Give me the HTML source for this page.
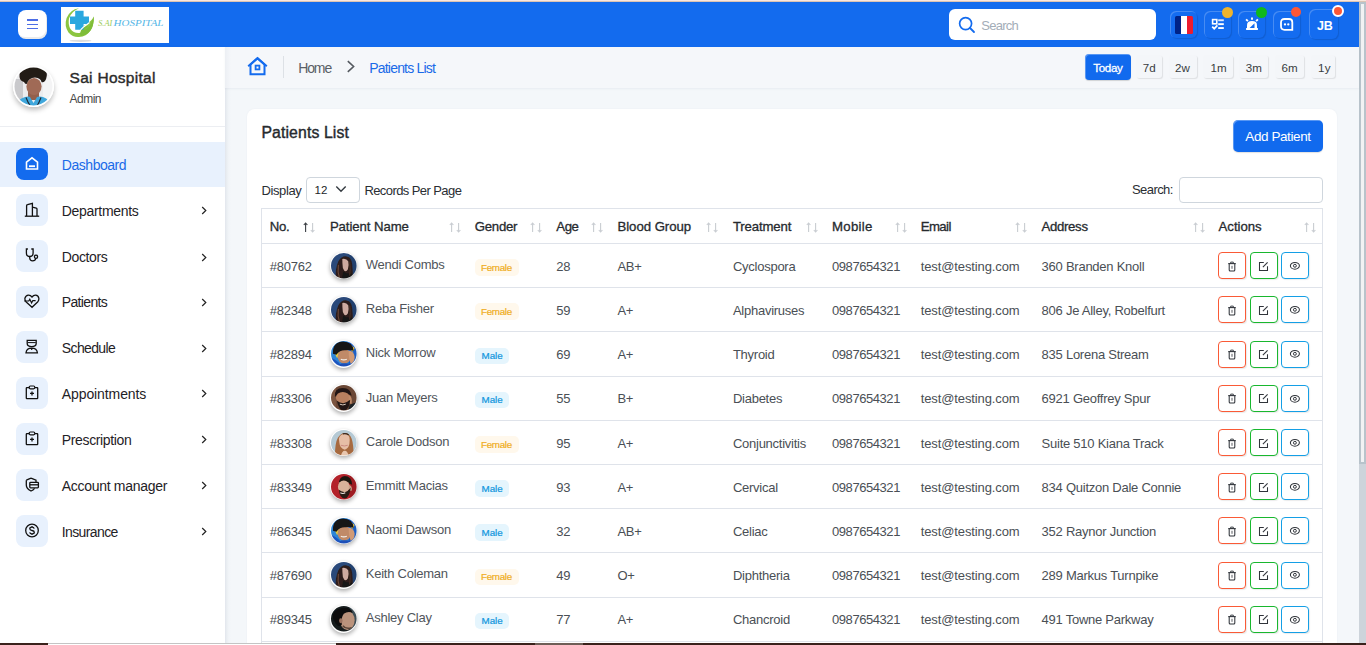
<!DOCTYPE html>
<html><head><meta charset="utf-8"><title>Patients List</title>
<style>
html,body{margin:0;padding:0}
body{width:1366px;height:645px;overflow:hidden;position:relative;background:#f4f7fa;font-family:"Liberation Sans",sans-serif}
</style></head><body>
<div style="position:absolute;left:0;top:0;width:1366px;height:1px;background:#fae7de"></div><div style="position:absolute;left:0;top:1px;width:1366px;height:1px;background:#dcc4b4"></div>
<div style="position:absolute;left:0;top:2px;width:1359px;height:45px;background:#136bee"></div>
<div style="position:absolute;left:1359px;top:2px;width:7px;height:643px;background:#cdd4db"></div>
<div style="position:absolute;left:1359px;top:2px;width:7px;height:462px;background:#b8c3cb"></div>
<div style="position:absolute;left:1361px;top:4px;width:3px;height:458px;background:#f1f2f4"></div>
<div style="position:absolute;left:18px;top:10px;width:29px;height:29px;background:#fff;border-radius:8px;box-shadow:inset -1px -2px 0 rgba(0,0,0,0.08)"></div>
<div style="position:absolute;left:27px;top:19.3px;width:11px;height:1.6px;background:#4d6ee6"></div>
<div style="position:absolute;left:27px;top:23.5px;width:11px;height:1.6px;background:#4d6ee6"></div>
<div style="position:absolute;left:27px;top:27.7px;width:11px;height:1.6px;background:#4d6ee6"></div>
<div style="position:absolute;left:61px;top:7px;width:108px;height:36px;background:#fff"></div>
<svg style="position:absolute;left:61px;top:7px" width="108" height="36" viewBox="0 0 108 36">
 <ellipse cx="19.5" cy="33.8" rx="11" ry="1.1" fill="#dcdcdc"/>
 <path d="M18 1.2 Q9 2.5 5.6 11 Q3 19 7.5 25.5 Q12 30.5 18 30 Q25.5 29.5 29.5 23.5 Q33 18.5 32.8 9.5 Q31.5 12.5 29.5 14 Q28 15 26.5 16.5 Q22 19 19.5 22.5 Q18.8 24.5 18.5 26 Q12.5 26.5 9.5 22 Q6.8 17.5 8 11.5 Q10 4.5 18 1.2Z" fill="#8cc540"/>
 <path d="M18.5 26 Q19.5 21.5 23.5 19.5 Q26.5 18 27 19.5 Q25 21 22 23.5 Q25.5 22 28 19.8 Q30 17 32.8 9.5 Q33 18.5 29.5 23.5 Q26 28 20 29Z" fill="#7fbd38"/>
 <path d="M14.2 3.8 H22.6 V9.5 H28 V17 H22.6 V22.7 H14.2 V17 H9 V9.5 H14.2Z" fill="#2aa7df"/>
 <path d="M18.5 26 Q19.3 22 22.5 20 Q25.5 18 28.5 15.5" fill="none" stroke="#fff" stroke-width="1.1"/>
 <text x="37.2" y="19.3" font-family="Liberation Serif" font-style="italic" font-size="9" fill="#9ccc5a" textLength="14" lengthAdjust="spacingAndGlyphs">S.AI</text>
 <text x="52.5" y="19.3" font-family="Liberation Serif" font-style="italic" font-size="9" fill="#52b5e6" textLength="50" lengthAdjust="spacingAndGlyphs">HOSPITAL</text>
</svg>
<div style="position:absolute;left:949px;top:9px;width:207px;height:31px;background:#fff;border-radius:6px"></div>
<svg style="position:absolute;left:958px;top:16px" width="18" height="18" viewBox="0 0 18 18"><circle cx="7.6" cy="7.6" r="6" fill="none" stroke="#136bee" stroke-width="1.7"/><path d="M12 12 L16 16" stroke="#136bee" stroke-width="1.8" stroke-linecap="round"/></svg>
<div style="position:absolute;left:1170px;top:11px;width:27px;height:27px;border-radius:6px;box-shadow:inset 1px 1px 0 rgba(255,255,255,0.22), 1px 1px 1px rgba(0,0,0,0.12);background:#146cf0"></div>
<div style="position:absolute;left:1204px;top:11px;width:27px;height:27px;border-radius:6px;box-shadow:inset 1px 1px 0 rgba(255,255,255,0.22), 1px 1px 1px rgba(0,0,0,0.12);background:#146cf0"></div>
<div style="position:absolute;left:1238px;top:11px;width:27px;height:27px;border-radius:6px;box-shadow:inset 1px 1px 0 rgba(255,255,255,0.22), 1px 1px 1px rgba(0,0,0,0.12);background:#146cf0"></div>
<div style="position:absolute;left:1273px;top:11px;width:27px;height:27px;border-radius:6px;box-shadow:inset 1px 1px 0 rgba(255,255,255,0.22), 1px 1px 1px rgba(0,0,0,0.12);background:#146cf0"></div>
<div style="position:absolute;left:1309px;top:9px;width:29px;height:30px;border-radius:6px;box-shadow:inset 1px 1px 0 rgba(255,255,255,0.22), 1px 1px 1px rgba(0,0,0,0.12);background:#146cf0"></div>
<div style="position:absolute;left:1175px;top:16px;width:18px;height:18px;border-radius:1.5px;overflow:hidden;display:flex"><div style="flex:1;background:#002387"></div><div style="flex:1;background:#fff"></div><div style="flex:1;background:#ed1c2e"></div></div>
<svg style="position:absolute;left:1211px;top:18px" width="14" height="13" viewBox="0 0 14 13">
<rect x="1.6" y="1.6" width="4.2" height="4.2" fill="none" stroke="#fff" stroke-width="1.6"/>
<rect x="7.2" y="1.3" width="5.6" height="1.9" fill="#fff" opacity="0.85"/>
<rect x="7.2" y="5.2" width="5.6" height="1.9" fill="#fff"/>
<rect x="7.2" y="9.1" width="5.6" height="1.9" fill="#fff"/>
<path d="M1.2 8.7 L3.2 10.7 L6.4 7.3" fill="none" stroke="#fff" stroke-width="1.7"/>
</svg>
<svg style="position:absolute;left:1245px;top:17px" width="14" height="14" viewBox="0 0 14 14">
<path d="M2 12.9 V8.2 Q2 4 7 4 Q12 4 12 8.2 V12.9Z" fill="#fff"/>
<rect x="1.1" y="11" width="11.8" height="2" fill="#fff"/>
<path d="M4.6 11 L9.5 6.3 V11Z" fill="#146cf0"/>
<path d="M7 0.4 V2.8 M1.1 2.4 L2.9 4.1 M12.9 2.4 L11.1 4.1" stroke="#fff" stroke-width="1.9"/>
</svg>
<svg style="position:absolute;left:1280px;top:18px" width="14" height="13" viewBox="0 0 14 13">
<path d="M4.5 1 H9 Q12.3 1 12.3 4.3 V11.8 H4.5 Q1 11.8 1 8.3 V4.5 Q1 1 4.5 1Z" fill="none" stroke="#fff" stroke-width="1.8"/>
<circle cx="5" cy="6.4" r="1.15" fill="#fff"/><circle cx="8.3" cy="6.4" r="1.15" fill="#fff"/>
</svg>
<div style="position:absolute;left:1222px;top:7px;width:11px;height:11px;border-radius:50%;background:#efb42c"></div>
<div style="position:absolute;left:1256px;top:7px;width:11px;height:11px;border-radius:50%;background:#10b81c"></div>
<div style="position:absolute;left:1291px;top:7.4px;width:10px;height:10px;border-radius:50%;background:#fd5735"></div>
<div style="position:absolute;left:1332px;top:5px;width:8px;height:8px;border-radius:50%;background:#fd5735;border:2px solid #fff"></div>
<div style="position:absolute;left:0;top:47px;width:225px;height:598px;background:#fff;box-shadow:1px 0 3px rgba(30,50,90,0.06)"></div>
<div style="position:absolute;left:13px;top:66px;width:41px;height:41px;border-radius:50%;box-shadow:0 3px 5px rgba(0,0,0,0.25)"></div>
<svg style="position:absolute;left:13px;top:66px" width="41" height="41" viewBox="0 0 41 41">
<defs><clipPath id="av0"><circle cx="20.5" cy="20.5" r="19"/></clipPath><filter id="avb"><feGaussianBlur stdDeviation="0.5"/></filter></defs>
<circle cx="20.5" cy="20.5" r="20.5" fill="#fff"/>
<g clip-path="url(#av0)"><g filter="url(#avb)">
<rect width="41" height="41" fill="#ececee"/>
<rect x="0" y="13" width="10" height="28" fill="#c9c9cc"/>
<rect x="30" y="10" width="11" height="31" fill="#f4f4f5"/>
<rect x="15" y="24" width="11" height="10" fill="#94604c"/>
<path d="M3 41 Q4 33 12 31 Q16 30 17 31 L20.5 37 L24 31 Q26 30 30 31 Q37 33 38 41Z" fill="#3fa7dc"/>
<ellipse cx="21" cy="20.5" rx="7.6" ry="8.6" fill="#a06b56"/>
<path d="M6.5 11 Q5 3 13 2 Q16 -1 23 0 Q31 0 33 5 Q35 10 32 15 Q30 17 28.5 16 Q28 12 22 11.5 Q15.5 12 14 17.5 Q12.5 19 11 16 Q7 15 6.5 11Z" fill="#231a17"/>
<path d="M13 31.5 Q15 37 18 41 M28 31.5 Q26 37 23.5 41" stroke="#1d2733" stroke-width="1.1" fill="none"/>
</g></g>
</svg>
<div style="position:absolute;left:0;top:126px;width:225px;height:1px;background:#eceef2"></div>
<div style="position:absolute;left:0;top:142px;width:225px;height:45px;background:#e8f1fd"></div>
<div style="position:absolute;left:16px;top:148px;width:32px;height:32px;border-radius:8px;background:#136bee"></div>
<svg style="position:absolute;left:24px;top:156px" width="16" height="16" viewBox="0 0 16 16"><path d="M2.5 13 V6.2 L8 1.8 L13.5 6.2 V13 Z" fill="none" stroke="#fff" stroke-width="1.6"/><path d="M5 10.2 H11" stroke="#fff" stroke-width="1.8"/></svg>
<div style="position:absolute;left:16px;top:194px;width:32px;height:32px;border-radius:8px;background:#e8f1fd"></div>
<svg style="position:absolute;left:24px;top:202px" width="16" height="16" viewBox="0 0 16 16"><path d="M0.8 14.2 H15.2" stroke="#111" stroke-width="1.3"/><path d="M2.6 14 V3.7 Q2.6 2.9 3.5 2.7 L8.4 1.4 V14 M8.4 5.2 L12.3 6.2 Q13 6.4 13 7.2 V14" fill="none" stroke="#111" stroke-width="1.3"/></svg>
<svg style="position:absolute;left:200px;top:206.2px" width="9" height="9" viewBox="0 0 9 9"><path d="M2.2 1 L5.8 4.5 L2.2 8" fill="none" stroke="#222" stroke-width="1.2"/></svg>
<div style="position:absolute;left:16px;top:240px;width:32px;height:32px;border-radius:8px;background:#e8f1fd"></div>
<svg style="position:absolute;left:24px;top:248px" width="16" height="16" viewBox="0 0 16 16"><path d="M3.9 1 H2.4 V5 Q2.4 8.5 5.7 8.5 Q9.1 8.5 9.1 5 V1 H7.3" fill="none" stroke="#111" stroke-width="1.3"/><path d="M5.7 8.5 V10 Q5.9 12.8 8.6 12.8 Q11.4 12.8 11.8 10.3" fill="none" stroke="#111" stroke-width="1.3"/><circle cx="12" cy="8.8" r="1.6" fill="none" stroke="#111" stroke-width="1.3"/></svg>
<svg style="position:absolute;left:200px;top:252.60000000000002px" width="9" height="9" viewBox="0 0 9 9"><path d="M2.2 1 L5.8 4.5 L2.2 8" fill="none" stroke="#222" stroke-width="1.2"/></svg>
<div style="position:absolute;left:16px;top:286px;width:32px;height:32px;border-radius:8px;background:#e8f1fd"></div>
<svg style="position:absolute;left:24px;top:294px" width="16" height="16" viewBox="0 0 16 16"><path d="M8 13.3 L2.2 8 Q0.5 6.3 1 4 Q1.8 1.3 4.4 1.2 Q6.5 1.1 8 3 Q9.5 1.1 11.6 1.2 Q14.3 1.4 14.8 4.2 Q15.2 6.4 13.6 8 Z" fill="none" stroke="#111" stroke-width="1.3"/><path d="M0.2 7 H4.8 L5.8 5.2 L7.6 9 L8.8 6.6 H11.6" fill="none" stroke="#111" stroke-width="1.2"/></svg>
<svg style="position:absolute;left:200px;top:297.5px" width="9" height="9" viewBox="0 0 9 9"><path d="M2.2 1 L5.8 4.5 L2.2 8" fill="none" stroke="#222" stroke-width="1.2"/></svg>
<div style="position:absolute;left:16px;top:331px;width:32px;height:32px;border-radius:8px;background:#e8f1fd"></div>
<svg style="position:absolute;left:24px;top:339px" width="16" height="16" viewBox="0 0 16 16"><path d="M3.2 1.3 H12.2 V4.5 Q12.2 7.6 7.7 7.6 Q3.2 7.6 3.2 4.5 Z" fill="none" stroke="#111" stroke-width="1.3"/><path d="M3.6 3.6 H11.8" stroke="#111" stroke-width="1"/><path d="M2 13.8 Q2.5 9.3 7.7 9.2 Q12.9 9.3 13.4 13.8 Z" fill="none" stroke="#111" stroke-width="1.3"/><path d="M7.7 9.5 V11" stroke="#111" stroke-width="1.2"/></svg>
<svg style="position:absolute;left:200px;top:343.5px" width="9" height="9" viewBox="0 0 9 9"><path d="M2.2 1 L5.8 4.5 L2.2 8" fill="none" stroke="#222" stroke-width="1.2"/></svg>
<div style="position:absolute;left:16px;top:377px;width:32px;height:32px;border-radius:8px;background:#e8f1fd"></div>
<svg style="position:absolute;left:24px;top:385px" width="16" height="16" viewBox="0 0 16 16"><rect x="2.3" y="2.6" width="11.4" height="11" rx="0.6" fill="none" stroke="#111" stroke-width="1.3"/><rect x="5.2" y="1" width="5.6" height="2.8" rx="1.2" fill="#e8f1fd" stroke="#111" stroke-width="1.2"/><path d="M6 8.4 H10 M8 6.4 V10.4" stroke="#111" stroke-width="1.3"/></svg>
<svg style="position:absolute;left:200px;top:389.0px" width="9" height="9" viewBox="0 0 9 9"><path d="M2.2 1 L5.8 4.5 L2.2 8" fill="none" stroke="#222" stroke-width="1.2"/></svg>
<div style="position:absolute;left:16px;top:423px;width:32px;height:32px;border-radius:8px;background:#e8f1fd"></div>
<svg style="position:absolute;left:24px;top:431px" width="16" height="16" viewBox="0 0 16 16"><rect x="2.3" y="2.6" width="11.4" height="11" rx="0.6" fill="none" stroke="#111" stroke-width="1.3"/><rect x="5.2" y="1" width="5.6" height="2.8" rx="1.2" fill="#e8f1fd" stroke="#111" stroke-width="1.2"/><path d="M6 8.4 H10 M8 6.4 V10.4" stroke="#111" stroke-width="1.3"/></svg>
<svg style="position:absolute;left:200px;top:435.3px" width="9" height="9" viewBox="0 0 9 9"><path d="M2.2 1 L5.8 4.5 L2.2 8" fill="none" stroke="#222" stroke-width="1.2"/></svg>
<div style="position:absolute;left:16px;top:469px;width:32px;height:32px;border-radius:8px;background:#e8f1fd"></div>
<svg style="position:absolute;left:24px;top:477px" width="16" height="16" viewBox="0 0 16 16"><path d="M7 1.2 L12 3.2 V6 M2.3 3.2 L7 1.2 M2.3 3.2 V8 Q2.3 11.8 7 14 Q9.2 13 10.6 11.3" fill="none" stroke="#111" stroke-width="1.3"/><rect x="5.8" y="5.3" width="8.6" height="5.6" rx="0.8" fill="#e8f1fd" stroke="#111" stroke-width="1.3"/><path d="M6 7.8 H14.2" stroke="#111" stroke-width="1.3"/></svg>
<svg style="position:absolute;left:200px;top:481.2px" width="9" height="9" viewBox="0 0 9 9"><path d="M2.2 1 L5.8 4.5 L2.2 8" fill="none" stroke="#222" stroke-width="1.2"/></svg>
<div style="position:absolute;left:16px;top:515px;width:32px;height:32px;border-radius:8px;background:#e8f1fd"></div>
<svg style="position:absolute;left:24px;top:523px" width="16" height="16" viewBox="0 0 16 16"><circle cx="8" cy="7.5" r="6.3" fill="none" stroke="#111" stroke-width="1.3"/><path d="M10.2 5.6 Q9.8 4.2 8 4.2 Q5.8 4.2 5.8 5.8 Q5.8 7.2 8 7.5 Q10.3 7.8 10.3 9.3 Q10.3 10.9 8 10.9 Q6 10.9 5.7 9.4 M8 3 V4.2 M8 10.9 V12" fill="none" stroke="#111" stroke-width="1.3"/></svg>
<svg style="position:absolute;left:200px;top:527.1px" width="9" height="9" viewBox="0 0 9 9"><path d="M2.2 1 L5.8 4.5 L2.2 8" fill="none" stroke="#222" stroke-width="1.2"/></svg>
<div style="position:absolute;left:225px;top:47px;width:1134px;height:41px;background:#f5f7fa;box-shadow:0 1px 2px rgba(40,60,100,0.06)"></div>
<div style="position:absolute;left:225px;top:47px;width:6px;height:598px;background:linear-gradient(90deg,rgba(40,60,100,0.045),rgba(40,60,100,0))"></div>
<svg style="position:absolute;left:247px;top:56px" width="21" height="20" viewBox="0 0 21 20"><path d="M3.5 18.2 V8.6 L10.5 2.4 L17.5 8.6 V18.2 Z" fill="none" stroke="#136bee" stroke-width="2"/><path d="M1.2 10.2 L10.5 2 L19.8 10.2" fill="none" stroke="#136bee" stroke-width="2"/><rect x="8.6" y="9.6" width="3.8" height="3.8" fill="none" stroke="#136bee" stroke-width="1.8"/></svg>
<div style="position:absolute;left:283px;top:56px;width:1px;height:22px;background:#dde1e6"></div>
<svg style="position:absolute;left:345px;top:60px" width="12" height="13" viewBox="0 0 12 13"><path d="M2.8 1.2 L8.6 6.5 L2.8 11.8" fill="none" stroke="#555a60" stroke-width="1.6"/></svg>
<div style="position:absolute;left:1085px;top:54px;width:46px;height:26px;border-radius:4px;background:#116aee;box-shadow:inset 1px 1px 0 rgba(255,255,255,0.3), 0 1px 1px rgba(0,0,0,0.15)"></div>
<div style="position:absolute;left:1136px;top:55px;width:26px;height:23px;border-radius:3px;background:#f4f6f9;box-shadow:1px 1px 1px rgba(0,0,0,0.09)"></div>
<div style="position:absolute;left:1169px;top:55px;width:28px;height:23px;border-radius:3px;background:#f4f6f9;box-shadow:1px 1px 1px rgba(0,0,0,0.09)"></div>
<div style="position:absolute;left:1203px;top:55px;width:29.5px;height:23px;border-radius:3px;background:#f4f6f9;box-shadow:1px 1px 1px rgba(0,0,0,0.09)"></div>
<div style="position:absolute;left:1239px;top:55px;width:29.299999999999955px;height:23px;border-radius:3px;background:#f4f6f9;box-shadow:1px 1px 1px rgba(0,0,0,0.09)"></div>
<div style="position:absolute;left:1275.2px;top:55px;width:29.09999999999991px;height:23px;border-radius:3px;background:#f4f6f9;box-shadow:1px 1px 1px rgba(0,0,0,0.09)"></div>
<div style="position:absolute;left:1310.6px;top:55px;width:24.700000000000045px;height:23px;border-radius:3px;background:#f4f6f9;box-shadow:1px 1px 1px rgba(0,0,0,0.09)"></div>
<div style="position:absolute;left:247px;top:108.5px;width:1090px;height:600px;border-radius:8px;background:#fff;box-shadow:0 0 2px rgba(40,60,100,0.05)"></div>
<div style="position:absolute;left:1233px;top:120px;width:90px;height:32px;border-radius:5px;background:#116aee;box-shadow:inset 1px 1px 0 rgba(255,255,255,0.3), 0 1px 1px rgba(0,0,0,0.12)"></div>
<div style="position:absolute;left:306px;top:177px;width:52px;height:24px;border:1px solid #cfd6dd;border-radius:4px;background:#fff"></div>
<svg style="position:absolute;left:335px;top:185px" width="12" height="8" viewBox="0 0 12 8"><path d="M1.3 1.6 L6 6.3 L10.7 1.6" fill="none" stroke="#343a40" stroke-width="1.4"/></svg>
<div style="position:absolute;left:1179px;top:177px;width:142px;height:24px;border:1px solid #cfd6dd;border-radius:4px;background:#fff"></div>
<div style="position:absolute;left:261px;top:208px;width:1px;height:437px;background:#dfe3ea"></div>
<div style="position:absolute;left:1322px;top:208px;width:1px;height:437px;background:#dfe3ea"></div>
<div style="position:absolute;left:261px;top:208px;width:1062px;height:1px;background:#dfe3ea"></div>
<div style="position:absolute;left:261px;top:243.0px;width:1062px;height:1px;background:#dfe3ea"></div>
<div style="position:absolute;left:261px;top:287.2px;width:1062px;height:1px;background:#dfe3ea"></div>
<div style="position:absolute;left:261px;top:331.4px;width:1062px;height:1px;background:#dfe3ea"></div>
<div style="position:absolute;left:261px;top:375.6px;width:1062px;height:1px;background:#dfe3ea"></div>
<div style="position:absolute;left:261px;top:419.8px;width:1062px;height:1px;background:#dfe3ea"></div>
<div style="position:absolute;left:261px;top:464.0px;width:1062px;height:1px;background:#dfe3ea"></div>
<div style="position:absolute;left:261px;top:508.2px;width:1062px;height:1px;background:#dfe3ea"></div>
<div style="position:absolute;left:261px;top:552.4px;width:1062px;height:1px;background:#dfe3ea"></div>
<div style="position:absolute;left:261px;top:596.6px;width:1062px;height:1px;background:#dfe3ea"></div>
<div style="position:absolute;left:261px;top:640.8px;width:1062px;height:1px;background:#dfe3ea"></div>
<svg style="position:absolute;left:303.4px;top:222px" width="12" height="11" viewBox="0 0 12 11"><path d="M2.6 10 V1.2 M0.8 3 L2.6 1 L4.4 3" fill="none" stroke="#3b3f44" stroke-width="1.1"/><path d="M9.6 1 V9.8 M7.8 8 L9.6 10 L11.4 8" fill="none" stroke="#c9cdd2" stroke-width="1.1"/></svg>
<svg style="position:absolute;left:448.5px;top:222px" width="12" height="11" viewBox="0 0 12 11"><path d="M2.6 10 V1.2 M0.8 3 L2.6 1 L4.4 3" fill="none" stroke="#c9cdd2" stroke-width="1.1"/><path d="M9.6 1 V9.8 M7.8 8 L9.6 10 L11.4 8" fill="none" stroke="#c9cdd2" stroke-width="1.1"/></svg>
<svg style="position:absolute;left:530.2px;top:222px" width="12" height="11" viewBox="0 0 12 11"><path d="M2.6 10 V1.2 M0.8 3 L2.6 1 L4.4 3" fill="none" stroke="#c9cdd2" stroke-width="1.1"/><path d="M9.6 1 V9.8 M7.8 8 L9.6 10 L11.4 8" fill="none" stroke="#c9cdd2" stroke-width="1.1"/></svg>
<svg style="position:absolute;left:591.1px;top:222px" width="12" height="11" viewBox="0 0 12 11"><path d="M2.6 10 V1.2 M0.8 3 L2.6 1 L4.4 3" fill="none" stroke="#c9cdd2" stroke-width="1.1"/><path d="M9.6 1 V9.8 M7.8 8 L9.6 10 L11.4 8" fill="none" stroke="#c9cdd2" stroke-width="1.1"/></svg>
<svg style="position:absolute;left:705.5px;top:222px" width="12" height="11" viewBox="0 0 12 11"><path d="M2.6 10 V1.2 M0.8 3 L2.6 1 L4.4 3" fill="none" stroke="#c9cdd2" stroke-width="1.1"/><path d="M9.6 1 V9.8 M7.8 8 L9.6 10 L11.4 8" fill="none" stroke="#c9cdd2" stroke-width="1.1"/></svg>
<svg style="position:absolute;left:805.7px;top:222px" width="12" height="11" viewBox="0 0 12 11"><path d="M2.6 10 V1.2 M0.8 3 L2.6 1 L4.4 3" fill="none" stroke="#c9cdd2" stroke-width="1.1"/><path d="M9.6 1 V9.8 M7.8 8 L9.6 10 L11.4 8" fill="none" stroke="#c9cdd2" stroke-width="1.1"/></svg>
<svg style="position:absolute;left:894.7px;top:222px" width="12" height="11" viewBox="0 0 12 11"><path d="M2.6 10 V1.2 M0.8 3 L2.6 1 L4.4 3" fill="none" stroke="#c9cdd2" stroke-width="1.1"/><path d="M9.6 1 V9.8 M7.8 8 L9.6 10 L11.4 8" fill="none" stroke="#c9cdd2" stroke-width="1.1"/></svg>
<svg style="position:absolute;left:1015.4px;top:222px" width="12" height="11" viewBox="0 0 12 11"><path d="M2.6 10 V1.2 M0.8 3 L2.6 1 L4.4 3" fill="none" stroke="#c9cdd2" stroke-width="1.1"/><path d="M9.6 1 V9.8 M7.8 8 L9.6 10 L11.4 8" fill="none" stroke="#c9cdd2" stroke-width="1.1"/></svg>
<svg style="position:absolute;left:1193.1px;top:222px" width="12" height="11" viewBox="0 0 12 11"><path d="M2.6 10 V1.2 M0.8 3 L2.6 1 L4.4 3" fill="none" stroke="#c9cdd2" stroke-width="1.1"/><path d="M9.6 1 V9.8 M7.8 8 L9.6 10 L11.4 8" fill="none" stroke="#c9cdd2" stroke-width="1.1"/></svg>
<svg style="position:absolute;left:1303.7px;top:222px" width="12" height="11" viewBox="0 0 12 11"><path d="M2.6 10 V1.2 M0.8 3 L2.6 1 L4.4 3" fill="none" stroke="#c9cdd2" stroke-width="1.1"/><path d="M9.6 1 V9.8 M7.8 8 L9.6 10 L11.4 8" fill="none" stroke="#c9cdd2" stroke-width="1.1"/></svg>
<div style="position:absolute;left:329.7px;top:251.7px;width:27.6px;height:27.6px;border-radius:50%;background:#fff;box-shadow:0 2px 4px rgba(0,0,0,0.33)"></div>
<svg style="position:absolute;left:329.7px;top:251.7px" width="27.6" height="27.6" viewBox="0 0 28 28"><defs><clipPath id="c0"><circle cx="14" cy="14" r="13"/></clipPath><filter id="f0" x="-10%" y="-10%" width="120%" height="120%"><feGaussianBlur stdDeviation="0.45"/></filter></defs><g clip-path="url(#c0)"><g filter="url(#f0)"><rect width="28" height="28" fill="#2b4a7a"/><rect x="19" width="9" height="28" fill="#22406e"/><path d="M6 28 Q5 17 8.5 9.5 Q12 3.5 17 4.5 Q22 5.5 22.5 12.5 Q23.5 20 23 28Z" fill="#2d1f1a"/><path d="M12.5 7 Q16.5 6 18.5 9.5 Q19.5 14 18.2 17.5 Q16.5 20.5 14.5 19 Q12.5 16.5 12.6 11.5Z" fill="#cfaaa0"/><path d="M13.5 20 Q17 22.5 22 22 L24 28 H12Z" fill="#161314"/><path d="M8.5 13 Q7.5 20 9.5 26" stroke="#6e4838" stroke-width="1.1" fill="none"/><path d="M20 10 Q21 17 20 24" stroke="#4a3026" stroke-width="1" fill="none"/></g></g></svg>
<div style="position:absolute;left:475px;top:259.2px;width:44px;height:16.5px;border-radius:5px;background:#fff8ec"></div>
<div style="position:absolute;left:1218px;top:252.2px;width:26px;height:25px;border:1px solid #fa5a36;border-radius:4px;background:#fff;box-shadow:1px 1px 1px rgba(0,0,0,0.08)"></div>
<svg style="position:absolute;left:1227px;top:260.8px" width="10" height="11" viewBox="0 0 10 11"><path d="M1.2 2.6 H8.8" stroke="#30343a" stroke-width="1.1"/><path d="M3.7 2.3 V1.1 H6.3 V2.3" fill="none" stroke="#30343a" stroke-width="0.9"/><path d="M2.2 2.9 V8.9 Q2.2 9.9 3.2 9.9 H6.8 Q7.8 9.9 7.8 8.9 V2.9" fill="none" stroke="#30343a" stroke-width="1.05"/><path d="M5 4.8 V7.8" stroke="#30343a" stroke-width="0.8"/></svg>
<div style="position:absolute;left:1250px;top:252.2px;width:26px;height:25px;border:1px solid #18b72e;border-radius:4px;background:#fff;box-shadow:1px 1px 1px rgba(0,0,0,0.08)"></div>
<svg style="position:absolute;left:1258px;top:260.8px" width="11" height="11" viewBox="0 0 11 11"><path d="M5.8 1.5 H1.5 V9.5 H9.5 V5.2" fill="none" stroke="#30343a" stroke-width="1.05"/><path d="M4.9 6.1 L9.6 1.4" stroke="#30343a" stroke-width="1.1"/></svg>
<div style="position:absolute;left:1281px;top:252.2px;width:26px;height:25px;border:1px solid #149fe6;border-radius:4px;background:#fff;box-shadow:1px 1px 1px rgba(0,0,0,0.08)"></div>
<svg style="position:absolute;left:1289px;top:260.9px" width="12" height="10" viewBox="0 0 12 10"><ellipse cx="5.9" cy="4.8" rx="4.5" ry="3.4" fill="none" stroke="#30343a" stroke-width="1.05"/><circle cx="5.9" cy="4.8" r="1.45" fill="none" stroke="#30343a" stroke-width="1"/></svg>
<div style="position:absolute;left:329.7px;top:295.9px;width:27.6px;height:27.6px;border-radius:50%;background:#fff;box-shadow:0 2px 4px rgba(0,0,0,0.33)"></div>
<svg style="position:absolute;left:329.7px;top:295.9px" width="27.6" height="27.6" viewBox="0 0 28 28"><defs><clipPath id="c1"><circle cx="14" cy="14" r="13"/></clipPath><filter id="f1" x="-10%" y="-10%" width="120%" height="120%"><feGaussianBlur stdDeviation="0.45"/></filter></defs><g clip-path="url(#c1)"><g filter="url(#f1)"><rect width="28" height="28" fill="#2b4a7a"/><rect x="19" width="9" height="28" fill="#22406e"/><path d="M6 28 Q5 17 8.5 9.5 Q12 3.5 17 4.5 Q22 5.5 22.5 12.5 Q23.5 20 23 28Z" fill="#2d1f1a"/><path d="M12.5 7 Q16.5 6 18.5 9.5 Q19.5 14 18.2 17.5 Q16.5 20.5 14.5 19 Q12.5 16.5 12.6 11.5Z" fill="#cfaaa0"/><path d="M13.5 20 Q17 22.5 22 22 L24 28 H12Z" fill="#161314"/><path d="M8.5 13 Q7.5 20 9.5 26" stroke="#6e4838" stroke-width="1.1" fill="none"/><path d="M20 10 Q21 17 20 24" stroke="#4a3026" stroke-width="1" fill="none"/></g></g></svg>
<div style="position:absolute;left:475px;top:303.4px;width:44px;height:16.5px;border-radius:5px;background:#fff8ec"></div>
<div style="position:absolute;left:1218px;top:296.4px;width:26px;height:25px;border:1px solid #fa5a36;border-radius:4px;background:#fff;box-shadow:1px 1px 1px rgba(0,0,0,0.08)"></div>
<svg style="position:absolute;left:1227px;top:305.0px" width="10" height="11" viewBox="0 0 10 11"><path d="M1.2 2.6 H8.8" stroke="#30343a" stroke-width="1.1"/><path d="M3.7 2.3 V1.1 H6.3 V2.3" fill="none" stroke="#30343a" stroke-width="0.9"/><path d="M2.2 2.9 V8.9 Q2.2 9.9 3.2 9.9 H6.8 Q7.8 9.9 7.8 8.9 V2.9" fill="none" stroke="#30343a" stroke-width="1.05"/><path d="M5 4.8 V7.8" stroke="#30343a" stroke-width="0.8"/></svg>
<div style="position:absolute;left:1250px;top:296.4px;width:26px;height:25px;border:1px solid #18b72e;border-radius:4px;background:#fff;box-shadow:1px 1px 1px rgba(0,0,0,0.08)"></div>
<svg style="position:absolute;left:1258px;top:305.0px" width="11" height="11" viewBox="0 0 11 11"><path d="M5.8 1.5 H1.5 V9.5 H9.5 V5.2" fill="none" stroke="#30343a" stroke-width="1.05"/><path d="M4.9 6.1 L9.6 1.4" stroke="#30343a" stroke-width="1.1"/></svg>
<div style="position:absolute;left:1281px;top:296.4px;width:26px;height:25px;border:1px solid #149fe6;border-radius:4px;background:#fff;box-shadow:1px 1px 1px rgba(0,0,0,0.08)"></div>
<svg style="position:absolute;left:1289px;top:305.1px" width="12" height="10" viewBox="0 0 12 10"><ellipse cx="5.9" cy="4.8" rx="4.5" ry="3.4" fill="none" stroke="#30343a" stroke-width="1.05"/><circle cx="5.9" cy="4.8" r="1.45" fill="none" stroke="#30343a" stroke-width="1"/></svg>
<div style="position:absolute;left:329.7px;top:340.1px;width:27.6px;height:27.6px;border-radius:50%;background:#fff;box-shadow:0 2px 4px rgba(0,0,0,0.33)"></div>
<svg style="position:absolute;left:329.7px;top:340.1px" width="27.6" height="27.6" viewBox="0 0 28 28"><defs><clipPath id="c2"><circle cx="14" cy="14" r="13"/></clipPath><filter id="f2" x="-10%" y="-10%" width="120%" height="120%"><feGaussianBlur stdDeviation="0.45"/></filter></defs><g clip-path="url(#c2)"><g filter="url(#f2)"><rect width="28" height="28" fill="#2f86d6"/><rect x="19" width="9" height="28" fill="#1f5fc4"/><path d="M0 18 Q8 20 12 27 L0 28Z" fill="#1d55c0"/><path d="M21 5 L25 8 L23 12 L20 9Z" fill="#e9c53c"/><path d="M5 14 L9 12 L10 17 L7 18Z" fill="#e9d040"/><ellipse cx="14.5" cy="16.5" rx="6.8" ry="7.5" fill="#c08a68"/><path d="M3 14 Q2.5 2 13 1.5 Q23.5 2 24 11 Q20 9.5 16 10.5 Q10 10 6.5 15Z" fill="#161212"/><path d="M19 11 Q24 11 25 17 Q25 23 21 24 Q19 20 19 11Z" fill="#d19a75"/><path d="M9 25 Q14 22 22 25 L22 28 H8Z" fill="#1b4fb8"/><path d="M11 19.5 Q14 21 17 19.5" stroke="#f4f0ea" stroke-width="1.2" fill="none"/></g></g></svg>
<div style="position:absolute;left:475px;top:347.6px;width:34px;height:16.5px;border-radius:5px;background:#e5f5fd"></div>
<div style="position:absolute;left:1218px;top:340.6px;width:26px;height:25px;border:1px solid #fa5a36;border-radius:4px;background:#fff;box-shadow:1px 1px 1px rgba(0,0,0,0.08)"></div>
<svg style="position:absolute;left:1227px;top:349.2px" width="10" height="11" viewBox="0 0 10 11"><path d="M1.2 2.6 H8.8" stroke="#30343a" stroke-width="1.1"/><path d="M3.7 2.3 V1.1 H6.3 V2.3" fill="none" stroke="#30343a" stroke-width="0.9"/><path d="M2.2 2.9 V8.9 Q2.2 9.9 3.2 9.9 H6.8 Q7.8 9.9 7.8 8.9 V2.9" fill="none" stroke="#30343a" stroke-width="1.05"/><path d="M5 4.8 V7.8" stroke="#30343a" stroke-width="0.8"/></svg>
<div style="position:absolute;left:1250px;top:340.6px;width:26px;height:25px;border:1px solid #18b72e;border-radius:4px;background:#fff;box-shadow:1px 1px 1px rgba(0,0,0,0.08)"></div>
<svg style="position:absolute;left:1258px;top:349.2px" width="11" height="11" viewBox="0 0 11 11"><path d="M5.8 1.5 H1.5 V9.5 H9.5 V5.2" fill="none" stroke="#30343a" stroke-width="1.05"/><path d="M4.9 6.1 L9.6 1.4" stroke="#30343a" stroke-width="1.1"/></svg>
<div style="position:absolute;left:1281px;top:340.6px;width:26px;height:25px;border:1px solid #149fe6;border-radius:4px;background:#fff;box-shadow:1px 1px 1px rgba(0,0,0,0.08)"></div>
<svg style="position:absolute;left:1289px;top:349.3px" width="12" height="10" viewBox="0 0 12 10"><ellipse cx="5.9" cy="4.8" rx="4.5" ry="3.4" fill="none" stroke="#30343a" stroke-width="1.05"/><circle cx="5.9" cy="4.8" r="1.45" fill="none" stroke="#30343a" stroke-width="1"/></svg>
<div style="position:absolute;left:329.7px;top:384.3px;width:27.6px;height:27.6px;border-radius:50%;background:#fff;box-shadow:0 2px 4px rgba(0,0,0,0.33)"></div>
<svg style="position:absolute;left:329.7px;top:384.3px" width="27.6" height="27.6" viewBox="0 0 28 28"><defs><clipPath id="c3"><circle cx="14" cy="14" r="13"/></clipPath><filter id="f3" x="-10%" y="-10%" width="120%" height="120%"><feGaussianBlur stdDeviation="0.45"/></filter></defs><g clip-path="url(#c3)"><g filter="url(#f3)"><rect width="28" height="28" fill="#6b4634"/><rect width="6" height="28" fill="#7c5441"/><path d="M5 13 Q4 4 13 4 Q21 4 22 12 Q17 9 12 10 Q8 11 5 13Z" fill="#231712"/><ellipse cx="13" cy="14" rx="7" ry="6" fill="#b98060"/><path d="M19 11 Q23 13 22 20 L19 20Z" fill="#c08a68"/><path d="M7 17 Q9 27 14 27 Q20 26 20.5 16 Q17 19 13.5 19.5 Q10 19.5 7 17Z" fill="#241915"/><path d="M10 20.5 Q13 22 16 20.5" stroke="#d8c8be" stroke-width="1" fill="none"/><path d="M20 21 L28 18 V28 H18Z" fill="#1d2226"/></g></g></svg>
<div style="position:absolute;left:475px;top:391.8px;width:34px;height:16.5px;border-radius:5px;background:#e5f5fd"></div>
<div style="position:absolute;left:1218px;top:384.8px;width:26px;height:25px;border:1px solid #fa5a36;border-radius:4px;background:#fff;box-shadow:1px 1px 1px rgba(0,0,0,0.08)"></div>
<svg style="position:absolute;left:1227px;top:393.4px" width="10" height="11" viewBox="0 0 10 11"><path d="M1.2 2.6 H8.8" stroke="#30343a" stroke-width="1.1"/><path d="M3.7 2.3 V1.1 H6.3 V2.3" fill="none" stroke="#30343a" stroke-width="0.9"/><path d="M2.2 2.9 V8.9 Q2.2 9.9 3.2 9.9 H6.8 Q7.8 9.9 7.8 8.9 V2.9" fill="none" stroke="#30343a" stroke-width="1.05"/><path d="M5 4.8 V7.8" stroke="#30343a" stroke-width="0.8"/></svg>
<div style="position:absolute;left:1250px;top:384.8px;width:26px;height:25px;border:1px solid #18b72e;border-radius:4px;background:#fff;box-shadow:1px 1px 1px rgba(0,0,0,0.08)"></div>
<svg style="position:absolute;left:1258px;top:393.4px" width="11" height="11" viewBox="0 0 11 11"><path d="M5.8 1.5 H1.5 V9.5 H9.5 V5.2" fill="none" stroke="#30343a" stroke-width="1.05"/><path d="M4.9 6.1 L9.6 1.4" stroke="#30343a" stroke-width="1.1"/></svg>
<div style="position:absolute;left:1281px;top:384.8px;width:26px;height:25px;border:1px solid #149fe6;border-radius:4px;background:#fff;box-shadow:1px 1px 1px rgba(0,0,0,0.08)"></div>
<svg style="position:absolute;left:1289px;top:393.5px" width="12" height="10" viewBox="0 0 12 10"><ellipse cx="5.9" cy="4.8" rx="4.5" ry="3.4" fill="none" stroke="#30343a" stroke-width="1.05"/><circle cx="5.9" cy="4.8" r="1.45" fill="none" stroke="#30343a" stroke-width="1"/></svg>
<div style="position:absolute;left:329.7px;top:428.5px;width:27.6px;height:27.6px;border-radius:50%;background:#fff;box-shadow:0 2px 4px rgba(0,0,0,0.33)"></div>
<svg style="position:absolute;left:329.7px;top:428.5px" width="27.6" height="27.6" viewBox="0 0 28 28"><defs><clipPath id="c4"><circle cx="14" cy="14" r="13"/></clipPath><filter id="f4" x="-10%" y="-10%" width="120%" height="120%"><feGaussianBlur stdDeviation="0.45"/></filter></defs><g clip-path="url(#c4)"><g filter="url(#f4)"><rect width="28" height="28" fill="#b5c9d4"/><path d="M5 28 Q5 14 8 9 Q11 4 15 4 Q20 4 22 10 Q24 16 24 28Z" fill="#a76b40"/><path d="M9 10 Q10 5 15 5 Q20 5 20 11 Q20 20 15 21 Q10 20 9.5 14Z" fill="#e6bea6"/><path d="M11 16.5 Q14.5 18 18 16.5" stroke="#c98a80" stroke-width="1" fill="none"/><path d="M11 28 Q12 22 15 22 Q18 22 19 28Z" fill="#e8c6ae"/><path d="M13 5 Q16 4 19 6" stroke="#3a2a20" stroke-width="1.2" fill="none"/></g></g></svg>
<div style="position:absolute;left:475px;top:436.0px;width:44px;height:16.5px;border-radius:5px;background:#fff8ec"></div>
<div style="position:absolute;left:1218px;top:429.0px;width:26px;height:25px;border:1px solid #fa5a36;border-radius:4px;background:#fff;box-shadow:1px 1px 1px rgba(0,0,0,0.08)"></div>
<svg style="position:absolute;left:1227px;top:437.6px" width="10" height="11" viewBox="0 0 10 11"><path d="M1.2 2.6 H8.8" stroke="#30343a" stroke-width="1.1"/><path d="M3.7 2.3 V1.1 H6.3 V2.3" fill="none" stroke="#30343a" stroke-width="0.9"/><path d="M2.2 2.9 V8.9 Q2.2 9.9 3.2 9.9 H6.8 Q7.8 9.9 7.8 8.9 V2.9" fill="none" stroke="#30343a" stroke-width="1.05"/><path d="M5 4.8 V7.8" stroke="#30343a" stroke-width="0.8"/></svg>
<div style="position:absolute;left:1250px;top:429.0px;width:26px;height:25px;border:1px solid #18b72e;border-radius:4px;background:#fff;box-shadow:1px 1px 1px rgba(0,0,0,0.08)"></div>
<svg style="position:absolute;left:1258px;top:437.6px" width="11" height="11" viewBox="0 0 11 11"><path d="M5.8 1.5 H1.5 V9.5 H9.5 V5.2" fill="none" stroke="#30343a" stroke-width="1.05"/><path d="M4.9 6.1 L9.6 1.4" stroke="#30343a" stroke-width="1.1"/></svg>
<div style="position:absolute;left:1281px;top:429.0px;width:26px;height:25px;border:1px solid #149fe6;border-radius:4px;background:#fff;box-shadow:1px 1px 1px rgba(0,0,0,0.08)"></div>
<svg style="position:absolute;left:1289px;top:437.7px" width="12" height="10" viewBox="0 0 12 10"><ellipse cx="5.9" cy="4.8" rx="4.5" ry="3.4" fill="none" stroke="#30343a" stroke-width="1.05"/><circle cx="5.9" cy="4.8" r="1.45" fill="none" stroke="#30343a" stroke-width="1"/></svg>
<div style="position:absolute;left:329.7px;top:472.7px;width:27.6px;height:27.6px;border-radius:50%;background:#fff;box-shadow:0 2px 4px rgba(0,0,0,0.33)"></div>
<svg style="position:absolute;left:329.7px;top:472.7px" width="27.6" height="27.6" viewBox="0 0 28 28"><defs><clipPath id="c5"><circle cx="14" cy="14" r="13"/></clipPath><filter id="f5" x="-10%" y="-10%" width="120%" height="120%"><feGaussianBlur stdDeviation="0.45"/></filter></defs><g clip-path="url(#c5)"><g filter="url(#f5)"><rect width="28" height="28" fill="#b3212a"/><rect x="20" width="8" height="28" fill="#9e1c24"/><path d="M9 11 Q9 4 15 3 Q22 3 22.5 12 Q19 10 15 10 Q11 10 9 11Z" fill="#1f1511"/><ellipse cx="14" cy="14" rx="6" ry="6.5" fill="#d9b29a"/><path d="M19 12 Q23 13 22 18 L19 18Z" fill="#c9a088"/><path d="M9 17 Q10 26 15 26 Q20 25 21 15 Q18 19 15 19.5 Q11 19 9 17Z" fill="#2b1b15"/><path d="M10.5 20 Q13 21.5 15.5 20" stroke="#efe8e2" stroke-width="1.1" fill="none"/><path d="M14 28 Q18 24 26 24 V28Z" fill="#d7202a"/></g></g></svg>
<div style="position:absolute;left:475px;top:480.2px;width:34px;height:16.5px;border-radius:5px;background:#e5f5fd"></div>
<div style="position:absolute;left:1218px;top:473.2px;width:26px;height:25px;border:1px solid #fa5a36;border-radius:4px;background:#fff;box-shadow:1px 1px 1px rgba(0,0,0,0.08)"></div>
<svg style="position:absolute;left:1227px;top:481.8px" width="10" height="11" viewBox="0 0 10 11"><path d="M1.2 2.6 H8.8" stroke="#30343a" stroke-width="1.1"/><path d="M3.7 2.3 V1.1 H6.3 V2.3" fill="none" stroke="#30343a" stroke-width="0.9"/><path d="M2.2 2.9 V8.9 Q2.2 9.9 3.2 9.9 H6.8 Q7.8 9.9 7.8 8.9 V2.9" fill="none" stroke="#30343a" stroke-width="1.05"/><path d="M5 4.8 V7.8" stroke="#30343a" stroke-width="0.8"/></svg>
<div style="position:absolute;left:1250px;top:473.2px;width:26px;height:25px;border:1px solid #18b72e;border-radius:4px;background:#fff;box-shadow:1px 1px 1px rgba(0,0,0,0.08)"></div>
<svg style="position:absolute;left:1258px;top:481.8px" width="11" height="11" viewBox="0 0 11 11"><path d="M5.8 1.5 H1.5 V9.5 H9.5 V5.2" fill="none" stroke="#30343a" stroke-width="1.05"/><path d="M4.9 6.1 L9.6 1.4" stroke="#30343a" stroke-width="1.1"/></svg>
<div style="position:absolute;left:1281px;top:473.2px;width:26px;height:25px;border:1px solid #149fe6;border-radius:4px;background:#fff;box-shadow:1px 1px 1px rgba(0,0,0,0.08)"></div>
<svg style="position:absolute;left:1289px;top:481.9px" width="12" height="10" viewBox="0 0 12 10"><ellipse cx="5.9" cy="4.8" rx="4.5" ry="3.4" fill="none" stroke="#30343a" stroke-width="1.05"/><circle cx="5.9" cy="4.8" r="1.45" fill="none" stroke="#30343a" stroke-width="1"/></svg>
<div style="position:absolute;left:329.7px;top:516.9px;width:27.6px;height:27.6px;border-radius:50%;background:#fff;box-shadow:0 2px 4px rgba(0,0,0,0.33)"></div>
<svg style="position:absolute;left:329.7px;top:516.9px" width="27.6" height="27.6" viewBox="0 0 28 28"><defs><clipPath id="c6"><circle cx="14" cy="14" r="13"/></clipPath><filter id="f6" x="-10%" y="-10%" width="120%" height="120%"><feGaussianBlur stdDeviation="0.45"/></filter></defs><g clip-path="url(#c6)"><g filter="url(#f6)"><rect width="28" height="28" fill="#2f86d6"/><rect x="19" width="9" height="28" fill="#1f5fc4"/><path d="M0 18 Q8 20 12 27 L0 28Z" fill="#1d55c0"/><path d="M21 5 L25 8 L23 12 L20 9Z" fill="#e9c53c"/><path d="M5 14 L9 12 L10 17 L7 18Z" fill="#e9d040"/><ellipse cx="14.5" cy="16.5" rx="6.8" ry="7.5" fill="#c08a68"/><path d="M3 14 Q2.5 2 13 1.5 Q23.5 2 24 11 Q20 9.5 16 10.5 Q10 10 6.5 15Z" fill="#161212"/><path d="M19 11 Q24 11 25 17 Q25 23 21 24 Q19 20 19 11Z" fill="#d19a75"/><path d="M9 25 Q14 22 22 25 L22 28 H8Z" fill="#1b4fb8"/><path d="M11 19.5 Q14 21 17 19.5" stroke="#f4f0ea" stroke-width="1.2" fill="none"/></g></g></svg>
<div style="position:absolute;left:475px;top:524.4px;width:34px;height:16.5px;border-radius:5px;background:#e5f5fd"></div>
<div style="position:absolute;left:1218px;top:517.4px;width:26px;height:25px;border:1px solid #fa5a36;border-radius:4px;background:#fff;box-shadow:1px 1px 1px rgba(0,0,0,0.08)"></div>
<svg style="position:absolute;left:1227px;top:526.0px" width="10" height="11" viewBox="0 0 10 11"><path d="M1.2 2.6 H8.8" stroke="#30343a" stroke-width="1.1"/><path d="M3.7 2.3 V1.1 H6.3 V2.3" fill="none" stroke="#30343a" stroke-width="0.9"/><path d="M2.2 2.9 V8.9 Q2.2 9.9 3.2 9.9 H6.8 Q7.8 9.9 7.8 8.9 V2.9" fill="none" stroke="#30343a" stroke-width="1.05"/><path d="M5 4.8 V7.8" stroke="#30343a" stroke-width="0.8"/></svg>
<div style="position:absolute;left:1250px;top:517.4px;width:26px;height:25px;border:1px solid #18b72e;border-radius:4px;background:#fff;box-shadow:1px 1px 1px rgba(0,0,0,0.08)"></div>
<svg style="position:absolute;left:1258px;top:526.0px" width="11" height="11" viewBox="0 0 11 11"><path d="M5.8 1.5 H1.5 V9.5 H9.5 V5.2" fill="none" stroke="#30343a" stroke-width="1.05"/><path d="M4.9 6.1 L9.6 1.4" stroke="#30343a" stroke-width="1.1"/></svg>
<div style="position:absolute;left:1281px;top:517.4px;width:26px;height:25px;border:1px solid #149fe6;border-radius:4px;background:#fff;box-shadow:1px 1px 1px rgba(0,0,0,0.08)"></div>
<svg style="position:absolute;left:1289px;top:526.1px" width="12" height="10" viewBox="0 0 12 10"><ellipse cx="5.9" cy="4.8" rx="4.5" ry="3.4" fill="none" stroke="#30343a" stroke-width="1.05"/><circle cx="5.9" cy="4.8" r="1.45" fill="none" stroke="#30343a" stroke-width="1"/></svg>
<div style="position:absolute;left:329.7px;top:561.1px;width:27.6px;height:27.6px;border-radius:50%;background:#fff;box-shadow:0 2px 4px rgba(0,0,0,0.33)"></div>
<svg style="position:absolute;left:329.7px;top:561.1px" width="27.6" height="27.6" viewBox="0 0 28 28"><defs><clipPath id="c7"><circle cx="14" cy="14" r="13"/></clipPath><filter id="f7" x="-10%" y="-10%" width="120%" height="120%"><feGaussianBlur stdDeviation="0.45"/></filter></defs><g clip-path="url(#c7)"><g filter="url(#f7)"><rect width="28" height="28" fill="#2b4a7a"/><rect x="19" width="9" height="28" fill="#22406e"/><path d="M6 28 Q5 17 8.5 9.5 Q12 3.5 17 4.5 Q22 5.5 22.5 12.5 Q23.5 20 23 28Z" fill="#2d1f1a"/><path d="M12.5 7 Q16.5 6 18.5 9.5 Q19.5 14 18.2 17.5 Q16.5 20.5 14.5 19 Q12.5 16.5 12.6 11.5Z" fill="#cfaaa0"/><path d="M13.5 20 Q17 22.5 22 22 L24 28 H12Z" fill="#161314"/><path d="M8.5 13 Q7.5 20 9.5 26" stroke="#6e4838" stroke-width="1.1" fill="none"/><path d="M20 10 Q21 17 20 24" stroke="#4a3026" stroke-width="1" fill="none"/></g></g></svg>
<div style="position:absolute;left:475px;top:568.6px;width:44px;height:16.5px;border-radius:5px;background:#fff8ec"></div>
<div style="position:absolute;left:1218px;top:561.6px;width:26px;height:25px;border:1px solid #fa5a36;border-radius:4px;background:#fff;box-shadow:1px 1px 1px rgba(0,0,0,0.08)"></div>
<svg style="position:absolute;left:1227px;top:570.2px" width="10" height="11" viewBox="0 0 10 11"><path d="M1.2 2.6 H8.8" stroke="#30343a" stroke-width="1.1"/><path d="M3.7 2.3 V1.1 H6.3 V2.3" fill="none" stroke="#30343a" stroke-width="0.9"/><path d="M2.2 2.9 V8.9 Q2.2 9.9 3.2 9.9 H6.8 Q7.8 9.9 7.8 8.9 V2.9" fill="none" stroke="#30343a" stroke-width="1.05"/><path d="M5 4.8 V7.8" stroke="#30343a" stroke-width="0.8"/></svg>
<div style="position:absolute;left:1250px;top:561.6px;width:26px;height:25px;border:1px solid #18b72e;border-radius:4px;background:#fff;box-shadow:1px 1px 1px rgba(0,0,0,0.08)"></div>
<svg style="position:absolute;left:1258px;top:570.2px" width="11" height="11" viewBox="0 0 11 11"><path d="M5.8 1.5 H1.5 V9.5 H9.5 V5.2" fill="none" stroke="#30343a" stroke-width="1.05"/><path d="M4.9 6.1 L9.6 1.4" stroke="#30343a" stroke-width="1.1"/></svg>
<div style="position:absolute;left:1281px;top:561.6px;width:26px;height:25px;border:1px solid #149fe6;border-radius:4px;background:#fff;box-shadow:1px 1px 1px rgba(0,0,0,0.08)"></div>
<svg style="position:absolute;left:1289px;top:570.3px" width="12" height="10" viewBox="0 0 12 10"><ellipse cx="5.9" cy="4.8" rx="4.5" ry="3.4" fill="none" stroke="#30343a" stroke-width="1.05"/><circle cx="5.9" cy="4.8" r="1.45" fill="none" stroke="#30343a" stroke-width="1"/></svg>
<div style="position:absolute;left:329.7px;top:605.3px;width:27.6px;height:27.6px;border-radius:50%;background:#fff;box-shadow:0 2px 4px rgba(0,0,0,0.33)"></div>
<svg style="position:absolute;left:329.7px;top:605.3px" width="27.6" height="27.6" viewBox="0 0 28 28"><defs><clipPath id="c8"><circle cx="14" cy="14" r="13"/></clipPath><filter id="f8" x="-10%" y="-10%" width="120%" height="120%"><feGaussianBlur stdDeviation="0.45"/></filter></defs><g clip-path="url(#c8)"><g filter="url(#f8)"><rect width="28" height="28" fill="#121a1e"/><rect x="20" width="8" height="28" fill="#3e4e55"/><ellipse cx="17.5" cy="15.5" rx="7.5" ry="9.8" fill="#bb937c"/><path d="M3 10 Q6 3 15 3 Q22 3 23 8 Q18 6 14 9 Q11 13 12 20 Q9 22 7 20 Q3 16 3 10Z" fill="#0d0b0a"/><ellipse cx="11" cy="16" rx="1.8" ry="2.5" fill="#9a7260"/><path d="M13 21 Q16 25 22 23" stroke="#5a4538" stroke-width="1.6" fill="none"/></g></g></svg>
<div style="position:absolute;left:475px;top:612.8px;width:34px;height:16.5px;border-radius:5px;background:#e5f5fd"></div>
<div style="position:absolute;left:1218px;top:605.8px;width:26px;height:25px;border:1px solid #fa5a36;border-radius:4px;background:#fff;box-shadow:1px 1px 1px rgba(0,0,0,0.08)"></div>
<svg style="position:absolute;left:1227px;top:614.4px" width="10" height="11" viewBox="0 0 10 11"><path d="M1.2 2.6 H8.8" stroke="#30343a" stroke-width="1.1"/><path d="M3.7 2.3 V1.1 H6.3 V2.3" fill="none" stroke="#30343a" stroke-width="0.9"/><path d="M2.2 2.9 V8.9 Q2.2 9.9 3.2 9.9 H6.8 Q7.8 9.9 7.8 8.9 V2.9" fill="none" stroke="#30343a" stroke-width="1.05"/><path d="M5 4.8 V7.8" stroke="#30343a" stroke-width="0.8"/></svg>
<div style="position:absolute;left:1250px;top:605.8px;width:26px;height:25px;border:1px solid #18b72e;border-radius:4px;background:#fff;box-shadow:1px 1px 1px rgba(0,0,0,0.08)"></div>
<svg style="position:absolute;left:1258px;top:614.4px" width="11" height="11" viewBox="0 0 11 11"><path d="M5.8 1.5 H1.5 V9.5 H9.5 V5.2" fill="none" stroke="#30343a" stroke-width="1.05"/><path d="M4.9 6.1 L9.6 1.4" stroke="#30343a" stroke-width="1.1"/></svg>
<div style="position:absolute;left:1281px;top:605.8px;width:26px;height:25px;border:1px solid #149fe6;border-radius:4px;background:#fff;box-shadow:1px 1px 1px rgba(0,0,0,0.08)"></div>
<svg style="position:absolute;left:1289px;top:614.5px" width="12" height="10" viewBox="0 0 12 10"><ellipse cx="5.9" cy="4.8" rx="4.5" ry="3.4" fill="none" stroke="#30343a" stroke-width="1.05"/><circle cx="5.9" cy="4.8" r="1.45" fill="none" stroke="#30343a" stroke-width="1"/></svg>
<div style="position:absolute;left:0;top:642.6px;width:1366px;height:2.4px;background:#3a221c"></div>
<div style="position:absolute;left:48px;top:642.6px;width:288px;height:2.4px;background:#fff;border-top:1px solid #c4c4c4;box-sizing:border-box"></div>
<div style="position:absolute;left:535px;top:642.6px;width:48px;height:2.4px;background:#6e5e57"></div>
<div style="position:absolute;left:981.3px;top:18.00px;font-size:13px;font-weight:400;color:#a3adb8;letter-spacing:-0.741px;white-space:pre;line-height:normal">Search</div>
<div style="position:absolute;left:1317.0px;top:19.00px;font-size:12.5px;font-weight:700;color:#fff;letter-spacing:-0.200px;white-space:pre;line-height:normal">JB</div>
<div style="position:absolute;left:69.5px;top:69.00px;font-size:15.5px;font-weight:400;color:#2b2b2b;letter-spacing:0.298px;white-space:pre;line-height:normal;-webkit-text-stroke:0.4px #2b2b2b">Sai Hospital</div>
<div style="position:absolute;left:69.5px;top:92.00px;font-size:12px;font-weight:400;color:#4a4a4a;letter-spacing:-0.504px;white-space:pre;line-height:normal">Admin</div>
<div style="position:absolute;left:61.8px;top:157.00px;font-size:14px;font-weight:400;color:#1a6ae8;letter-spacing:-0.463px;white-space:pre;line-height:normal">Dashboard</div>
<div style="position:absolute;left:61.8px;top:203.00px;font-size:14px;font-weight:400;color:#1f2226;letter-spacing:-0.316px;white-space:pre;line-height:normal">Departments</div>
<div style="position:absolute;left:61.8px;top:249.00px;font-size:14px;font-weight:400;color:#1f2226;letter-spacing:-0.372px;white-space:pre;line-height:normal">Doctors</div>
<div style="position:absolute;left:61.8px;top:294.00px;font-size:14px;font-weight:400;color:#1f2226;letter-spacing:-0.656px;white-space:pre;line-height:normal">Patients</div>
<div style="position:absolute;left:61.8px;top:340.00px;font-size:14px;font-weight:400;color:#1f2226;letter-spacing:-0.627px;white-space:pre;line-height:normal">Schedule</div>
<div style="position:absolute;left:61.8px;top:386.00px;font-size:14px;font-weight:400;color:#1f2226;letter-spacing:-0.101px;white-space:pre;line-height:normal">Appointments</div>
<div style="position:absolute;left:61.8px;top:432.00px;font-size:14px;font-weight:400;color:#1f2226;letter-spacing:-0.357px;white-space:pre;line-height:normal">Prescription</div>
<div style="position:absolute;left:61.8px;top:478.00px;font-size:14px;font-weight:400;color:#1f2226;letter-spacing:-0.302px;white-space:pre;line-height:normal">Account manager</div>
<div style="position:absolute;left:61.8px;top:524.00px;font-size:14px;font-weight:400;color:#1f2226;letter-spacing:-0.623px;white-space:pre;line-height:normal">Insurance</div>
<div style="position:absolute;left:298.2px;top:60.00px;font-size:14px;font-weight:400;color:#5a5f66;letter-spacing:-1.120px;white-space:pre;line-height:normal">Home</div>
<div style="position:absolute;left:369.3px;top:60.00px;font-size:14px;font-weight:400;color:#1a6ae8;letter-spacing:-0.814px;white-space:pre;line-height:normal">Patients List</div>
<div style="position:absolute;left:1093.2px;top:61.00px;font-size:11.6px;font-weight:400;color:#fff;letter-spacing:-0.309px;white-space:pre;line-height:normal;-webkit-text-stroke:0.3px #fff">Today</div>
<div style="position:absolute;left:1142.8px;top:61.00px;font-size:11.6px;font-weight:400;color:#383c41;letter-spacing:0.100px;white-space:pre;line-height:normal">7d</div>
<div style="position:absolute;left:1175.0px;top:61.00px;font-size:11.6px;font-weight:400;color:#383c41;letter-spacing:0.100px;white-space:pre;line-height:normal">2w</div>
<div style="position:absolute;left:1210.4px;top:61.00px;font-size:11.6px;font-weight:400;color:#383c41;letter-spacing:0.100px;white-space:pre;line-height:normal">1m</div>
<div style="position:absolute;left:1245.7px;top:61.00px;font-size:11.6px;font-weight:400;color:#383c41;letter-spacing:0.100px;white-space:pre;line-height:normal">3m</div>
<div style="position:absolute;left:1281.4px;top:61.00px;font-size:11.6px;font-weight:400;color:#383c41;letter-spacing:0.100px;white-space:pre;line-height:normal">6m</div>
<div style="position:absolute;left:1318.1px;top:61.00px;font-size:11.6px;font-weight:400;color:#383c41;letter-spacing:0.100px;white-space:pre;line-height:normal">1y</div>
<div style="position:absolute;left:261.4px;top:124.00px;font-size:15.8px;font-weight:400;color:#262a2e;letter-spacing:0.120px;white-space:pre;line-height:normal;-webkit-text-stroke:0.4px #262a2e">Patients List</div>
<div style="position:absolute;left:1245.3px;top:129.00px;font-size:13.5px;font-weight:400;color:#fff;letter-spacing:-0.411px;white-space:pre;line-height:normal">Add Patient</div>
<div style="position:absolute;left:261.4px;top:183.00px;font-size:13px;font-weight:400;color:#2a2e33;letter-spacing:-0.371px;white-space:pre;line-height:normal">Display</div>
<div style="position:absolute;left:314.6px;top:184.00px;font-size:11.5px;font-weight:400;color:#212529;letter-spacing:0.000px;white-space:pre;line-height:normal">12</div>
<div style="position:absolute;left:364.4px;top:183.00px;font-size:13px;font-weight:400;color:#2a2e33;letter-spacing:-0.582px;white-space:pre;line-height:normal">Records Per Page</div>
<div style="position:absolute;left:1132.0px;top:182.00px;font-size:13px;font-weight:400;color:#2a2e33;letter-spacing:-0.569px;white-space:pre;line-height:normal">Search:</div>
<div style="position:absolute;left:269.8px;top:219.00px;font-size:13.2px;font-weight:400;color:#262a2e;letter-spacing:-0.366px;white-space:pre;line-height:normal;-webkit-text-stroke:0.3px #262a2e">No.</div>
<div style="position:absolute;left:329.9px;top:219.00px;font-size:13.2px;font-weight:400;color:#262a2e;letter-spacing:-0.082px;white-space:pre;line-height:normal;-webkit-text-stroke:0.3px #262a2e">Patient Name</div>
<div style="position:absolute;left:474.8px;top:219.00px;font-size:13.2px;font-weight:400;color:#262a2e;letter-spacing:-0.280px;white-space:pre;line-height:normal;-webkit-text-stroke:0.3px #262a2e">Gender</div>
<div style="position:absolute;left:556.3px;top:219.00px;font-size:13.2px;font-weight:400;color:#262a2e;letter-spacing:-0.434px;white-space:pre;line-height:normal;-webkit-text-stroke:0.3px #262a2e">Age</div>
<div style="position:absolute;left:617.4px;top:219.00px;font-size:13.2px;font-weight:400;color:#262a2e;letter-spacing:-0.025px;white-space:pre;line-height:normal;-webkit-text-stroke:0.3px #262a2e">Blood Group</div>
<div style="position:absolute;left:732.9px;top:219.00px;font-size:13.2px;font-weight:400;color:#262a2e;letter-spacing:-0.139px;white-space:pre;line-height:normal;-webkit-text-stroke:0.3px #262a2e">Treatment</div>
<div style="position:absolute;left:832.0px;top:219.00px;font-size:13.2px;font-weight:400;color:#262a2e;letter-spacing:0.288px;white-space:pre;line-height:normal;-webkit-text-stroke:0.3px #262a2e">Mobile</div>
<div style="position:absolute;left:920.7px;top:219.00px;font-size:13.2px;font-weight:400;color:#262a2e;letter-spacing:-0.571px;white-space:pre;line-height:normal;-webkit-text-stroke:0.3px #262a2e">Email</div>
<div style="position:absolute;left:1041.6px;top:219.00px;font-size:13.2px;font-weight:400;color:#262a2e;letter-spacing:-0.332px;white-space:pre;line-height:normal;-webkit-text-stroke:0.3px #262a2e">Address</div>
<div style="position:absolute;left:1218.6px;top:219.00px;font-size:13.2px;font-weight:400;color:#262a2e;letter-spacing:-0.025px;white-space:pre;line-height:normal;-webkit-text-stroke:0.3px #262a2e">Actions</div>
<div style="position:absolute;left:269.8px;top:259.00px;font-size:13px;font-weight:400;color:#4a4f55;letter-spacing:-0.250px;white-space:pre;line-height:normal">#80762</div>
<div style="position:absolute;left:365.8px;top:257.00px;font-size:13px;font-weight:400;color:#50555b;letter-spacing:-0.250px;white-space:pre;line-height:normal">Wendi Combs</div>
<div style="position:absolute;left:481.0px;top:262.00px;font-size:9.8px;font-weight:400;color:#efad1c;letter-spacing:-0.314px;white-space:pre;line-height:normal;-webkit-text-stroke:0.2px #efad1c">Female</div>
<div style="position:absolute;left:556.3px;top:259.00px;font-size:13px;font-weight:400;color:#4a4f55;letter-spacing:-0.250px;white-space:pre;line-height:normal">28</div>
<div style="position:absolute;left:617.4px;top:259.00px;font-size:13px;font-weight:400;color:#4a4f55;letter-spacing:-0.250px;white-space:pre;line-height:normal">AB+</div>
<div style="position:absolute;left:732.9px;top:259.00px;font-size:13px;font-weight:400;color:#4a4f55;letter-spacing:-0.250px;white-space:pre;line-height:normal">Cyclospora</div>
<div style="position:absolute;left:832.0px;top:259.00px;font-size:13px;font-weight:400;color:#4a4f55;letter-spacing:-0.435px;white-space:pre;line-height:normal">0987654321</div>
<div style="position:absolute;left:920.7px;top:259.00px;font-size:13px;font-weight:400;color:#4a4f55;letter-spacing:-0.108px;white-space:pre;line-height:normal">test@testing.com</div>
<div style="position:absolute;left:1041.6px;top:259.00px;font-size:13px;font-weight:400;color:#4a4f55;letter-spacing:-0.250px;white-space:pre;line-height:normal">360 Branden Knoll</div>
<div style="position:absolute;left:269.8px;top:303.00px;font-size:13px;font-weight:400;color:#4a4f55;letter-spacing:-0.250px;white-space:pre;line-height:normal">#82348</div>
<div style="position:absolute;left:365.8px;top:301.00px;font-size:13px;font-weight:400;color:#50555b;letter-spacing:-0.250px;white-space:pre;line-height:normal">Reba Fisher</div>
<div style="position:absolute;left:481.0px;top:306.00px;font-size:9.8px;font-weight:400;color:#efad1c;letter-spacing:-0.314px;white-space:pre;line-height:normal;-webkit-text-stroke:0.2px #efad1c">Female</div>
<div style="position:absolute;left:556.3px;top:303.00px;font-size:13px;font-weight:400;color:#4a4f55;letter-spacing:-0.250px;white-space:pre;line-height:normal">59</div>
<div style="position:absolute;left:617.4px;top:303.00px;font-size:13px;font-weight:400;color:#4a4f55;letter-spacing:-0.250px;white-space:pre;line-height:normal">A+</div>
<div style="position:absolute;left:732.9px;top:303.00px;font-size:13px;font-weight:400;color:#4a4f55;letter-spacing:-0.250px;white-space:pre;line-height:normal">Alphaviruses</div>
<div style="position:absolute;left:832.0px;top:303.00px;font-size:13px;font-weight:400;color:#4a4f55;letter-spacing:-0.435px;white-space:pre;line-height:normal">0987654321</div>
<div style="position:absolute;left:920.7px;top:303.00px;font-size:13px;font-weight:400;color:#4a4f55;letter-spacing:-0.108px;white-space:pre;line-height:normal">test@testing.com</div>
<div style="position:absolute;left:1041.6px;top:303.00px;font-size:13px;font-weight:400;color:#4a4f55;letter-spacing:-0.250px;white-space:pre;line-height:normal">806 Je Alley, Robelfurt</div>
<div style="position:absolute;left:269.8px;top:347.00px;font-size:13px;font-weight:400;color:#4a4f55;letter-spacing:-0.250px;white-space:pre;line-height:normal">#82894</div>
<div style="position:absolute;left:365.8px;top:345.00px;font-size:13px;font-weight:400;color:#50555b;letter-spacing:-0.250px;white-space:pre;line-height:normal">Nick Morrow</div>
<div style="position:absolute;left:481.6px;top:350.00px;font-size:9.8px;font-weight:400;color:#1196dd;letter-spacing:-0.083px;white-space:pre;line-height:normal;-webkit-text-stroke:0.2px #1196dd">Male</div>
<div style="position:absolute;left:556.3px;top:347.00px;font-size:13px;font-weight:400;color:#4a4f55;letter-spacing:-0.250px;white-space:pre;line-height:normal">69</div>
<div style="position:absolute;left:617.4px;top:347.00px;font-size:13px;font-weight:400;color:#4a4f55;letter-spacing:-0.250px;white-space:pre;line-height:normal">A+</div>
<div style="position:absolute;left:732.9px;top:347.00px;font-size:13px;font-weight:400;color:#4a4f55;letter-spacing:-0.250px;white-space:pre;line-height:normal">Thyroid</div>
<div style="position:absolute;left:832.0px;top:347.00px;font-size:13px;font-weight:400;color:#4a4f55;letter-spacing:-0.435px;white-space:pre;line-height:normal">0987654321</div>
<div style="position:absolute;left:920.7px;top:347.00px;font-size:13px;font-weight:400;color:#4a4f55;letter-spacing:-0.108px;white-space:pre;line-height:normal">test@testing.com</div>
<div style="position:absolute;left:1041.6px;top:347.00px;font-size:13px;font-weight:400;color:#4a4f55;letter-spacing:-0.250px;white-space:pre;line-height:normal">835 Lorena Stream</div>
<div style="position:absolute;left:269.8px;top:391.00px;font-size:13px;font-weight:400;color:#4a4f55;letter-spacing:-0.250px;white-space:pre;line-height:normal">#83306</div>
<div style="position:absolute;left:365.8px;top:390.00px;font-size:13px;font-weight:400;color:#50555b;letter-spacing:-0.250px;white-space:pre;line-height:normal">Juan Meyers</div>
<div style="position:absolute;left:481.6px;top:394.00px;font-size:9.8px;font-weight:400;color:#1196dd;letter-spacing:-0.083px;white-space:pre;line-height:normal;-webkit-text-stroke:0.2px #1196dd">Male</div>
<div style="position:absolute;left:556.3px;top:391.00px;font-size:13px;font-weight:400;color:#4a4f55;letter-spacing:-0.250px;white-space:pre;line-height:normal">55</div>
<div style="position:absolute;left:617.4px;top:391.00px;font-size:13px;font-weight:400;color:#4a4f55;letter-spacing:-0.250px;white-space:pre;line-height:normal">B+</div>
<div style="position:absolute;left:732.9px;top:391.00px;font-size:13px;font-weight:400;color:#4a4f55;letter-spacing:-0.250px;white-space:pre;line-height:normal">Diabetes</div>
<div style="position:absolute;left:832.0px;top:391.00px;font-size:13px;font-weight:400;color:#4a4f55;letter-spacing:-0.435px;white-space:pre;line-height:normal">0987654321</div>
<div style="position:absolute;left:920.7px;top:391.00px;font-size:13px;font-weight:400;color:#4a4f55;letter-spacing:-0.108px;white-space:pre;line-height:normal">test@testing.com</div>
<div style="position:absolute;left:1041.6px;top:391.00px;font-size:13px;font-weight:400;color:#4a4f55;letter-spacing:-0.250px;white-space:pre;line-height:normal">6921 Geoffrey Spur</div>
<div style="position:absolute;left:269.8px;top:436.00px;font-size:13px;font-weight:400;color:#4a4f55;letter-spacing:-0.250px;white-space:pre;line-height:normal">#83308</div>
<div style="position:absolute;left:365.8px;top:434.00px;font-size:13px;font-weight:400;color:#50555b;letter-spacing:-0.250px;white-space:pre;line-height:normal">Carole Dodson</div>
<div style="position:absolute;left:481.0px;top:439.00px;font-size:9.8px;font-weight:400;color:#efad1c;letter-spacing:-0.314px;white-space:pre;line-height:normal;-webkit-text-stroke:0.2px #efad1c">Female</div>
<div style="position:absolute;left:556.3px;top:436.00px;font-size:13px;font-weight:400;color:#4a4f55;letter-spacing:-0.250px;white-space:pre;line-height:normal">95</div>
<div style="position:absolute;left:617.4px;top:436.00px;font-size:13px;font-weight:400;color:#4a4f55;letter-spacing:-0.250px;white-space:pre;line-height:normal">A+</div>
<div style="position:absolute;left:732.9px;top:436.00px;font-size:13px;font-weight:400;color:#4a4f55;letter-spacing:-0.250px;white-space:pre;line-height:normal">Conjunctivitis</div>
<div style="position:absolute;left:832.0px;top:436.00px;font-size:13px;font-weight:400;color:#4a4f55;letter-spacing:-0.435px;white-space:pre;line-height:normal">0987654321</div>
<div style="position:absolute;left:920.7px;top:436.00px;font-size:13px;font-weight:400;color:#4a4f55;letter-spacing:-0.108px;white-space:pre;line-height:normal">test@testing.com</div>
<div style="position:absolute;left:1041.6px;top:436.00px;font-size:13px;font-weight:400;color:#4a4f55;letter-spacing:-0.250px;white-space:pre;line-height:normal">Suite 510 Kiana Track</div>
<div style="position:absolute;left:269.8px;top:480.00px;font-size:13px;font-weight:400;color:#4a4f55;letter-spacing:-0.250px;white-space:pre;line-height:normal">#83349</div>
<div style="position:absolute;left:365.8px;top:478.00px;font-size:13px;font-weight:400;color:#50555b;letter-spacing:-0.250px;white-space:pre;line-height:normal">Emmitt Macias</div>
<div style="position:absolute;left:481.6px;top:483.00px;font-size:9.8px;font-weight:400;color:#1196dd;letter-spacing:-0.083px;white-space:pre;line-height:normal;-webkit-text-stroke:0.2px #1196dd">Male</div>
<div style="position:absolute;left:556.3px;top:480.00px;font-size:13px;font-weight:400;color:#4a4f55;letter-spacing:-0.250px;white-space:pre;line-height:normal">93</div>
<div style="position:absolute;left:617.4px;top:480.00px;font-size:13px;font-weight:400;color:#4a4f55;letter-spacing:-0.250px;white-space:pre;line-height:normal">A+</div>
<div style="position:absolute;left:732.9px;top:480.00px;font-size:13px;font-weight:400;color:#4a4f55;letter-spacing:-0.250px;white-space:pre;line-height:normal">Cervical</div>
<div style="position:absolute;left:832.0px;top:480.00px;font-size:13px;font-weight:400;color:#4a4f55;letter-spacing:-0.435px;white-space:pre;line-height:normal">0987654321</div>
<div style="position:absolute;left:920.7px;top:480.00px;font-size:13px;font-weight:400;color:#4a4f55;letter-spacing:-0.108px;white-space:pre;line-height:normal">test@testing.com</div>
<div style="position:absolute;left:1041.6px;top:480.00px;font-size:13px;font-weight:400;color:#4a4f55;letter-spacing:-0.250px;white-space:pre;line-height:normal">834 Quitzon Dale Connie</div>
<div style="position:absolute;left:269.8px;top:524.00px;font-size:13px;font-weight:400;color:#4a4f55;letter-spacing:-0.250px;white-space:pre;line-height:normal">#86345</div>
<div style="position:absolute;left:365.8px;top:522.00px;font-size:13px;font-weight:400;color:#50555b;letter-spacing:-0.250px;white-space:pre;line-height:normal">Naomi Dawson</div>
<div style="position:absolute;left:481.6px;top:527.00px;font-size:9.8px;font-weight:400;color:#1196dd;letter-spacing:-0.083px;white-space:pre;line-height:normal;-webkit-text-stroke:0.2px #1196dd">Male</div>
<div style="position:absolute;left:556.3px;top:524.00px;font-size:13px;font-weight:400;color:#4a4f55;letter-spacing:-0.250px;white-space:pre;line-height:normal">32</div>
<div style="position:absolute;left:617.4px;top:524.00px;font-size:13px;font-weight:400;color:#4a4f55;letter-spacing:-0.250px;white-space:pre;line-height:normal">AB+</div>
<div style="position:absolute;left:732.9px;top:524.00px;font-size:13px;font-weight:400;color:#4a4f55;letter-spacing:-0.250px;white-space:pre;line-height:normal">Celiac</div>
<div style="position:absolute;left:832.0px;top:524.00px;font-size:13px;font-weight:400;color:#4a4f55;letter-spacing:-0.435px;white-space:pre;line-height:normal">0987654321</div>
<div style="position:absolute;left:920.7px;top:524.00px;font-size:13px;font-weight:400;color:#4a4f55;letter-spacing:-0.108px;white-space:pre;line-height:normal">test@testing.com</div>
<div style="position:absolute;left:1041.6px;top:524.00px;font-size:13px;font-weight:400;color:#4a4f55;letter-spacing:-0.250px;white-space:pre;line-height:normal">352 Raynor Junction</div>
<div style="position:absolute;left:269.8px;top:568.00px;font-size:13px;font-weight:400;color:#4a4f55;letter-spacing:-0.250px;white-space:pre;line-height:normal">#87690</div>
<div style="position:absolute;left:365.8px;top:566.00px;font-size:13px;font-weight:400;color:#50555b;letter-spacing:-0.250px;white-space:pre;line-height:normal">Keith Coleman</div>
<div style="position:absolute;left:481.0px;top:571.00px;font-size:9.8px;font-weight:400;color:#efad1c;letter-spacing:-0.314px;white-space:pre;line-height:normal;-webkit-text-stroke:0.2px #efad1c">Female</div>
<div style="position:absolute;left:556.3px;top:568.00px;font-size:13px;font-weight:400;color:#4a4f55;letter-spacing:-0.250px;white-space:pre;line-height:normal">49</div>
<div style="position:absolute;left:617.4px;top:568.00px;font-size:13px;font-weight:400;color:#4a4f55;letter-spacing:-0.250px;white-space:pre;line-height:normal">O+</div>
<div style="position:absolute;left:732.9px;top:568.00px;font-size:13px;font-weight:400;color:#4a4f55;letter-spacing:-0.250px;white-space:pre;line-height:normal">Diphtheria</div>
<div style="position:absolute;left:832.0px;top:568.00px;font-size:13px;font-weight:400;color:#4a4f55;letter-spacing:-0.435px;white-space:pre;line-height:normal">0987654321</div>
<div style="position:absolute;left:920.7px;top:568.00px;font-size:13px;font-weight:400;color:#4a4f55;letter-spacing:-0.108px;white-space:pre;line-height:normal">test@testing.com</div>
<div style="position:absolute;left:1041.6px;top:568.00px;font-size:13px;font-weight:400;color:#4a4f55;letter-spacing:-0.250px;white-space:pre;line-height:normal">289 Markus Turnpike</div>
<div style="position:absolute;left:269.8px;top:612.00px;font-size:13px;font-weight:400;color:#4a4f55;letter-spacing:-0.250px;white-space:pre;line-height:normal">#89345</div>
<div style="position:absolute;left:365.8px;top:610.00px;font-size:13px;font-weight:400;color:#50555b;letter-spacing:-0.250px;white-space:pre;line-height:normal">Ashley Clay</div>
<div style="position:absolute;left:481.6px;top:615.00px;font-size:9.8px;font-weight:400;color:#1196dd;letter-spacing:-0.083px;white-space:pre;line-height:normal;-webkit-text-stroke:0.2px #1196dd">Male</div>
<div style="position:absolute;left:556.3px;top:612.00px;font-size:13px;font-weight:400;color:#4a4f55;letter-spacing:-0.250px;white-space:pre;line-height:normal">77</div>
<div style="position:absolute;left:617.4px;top:612.00px;font-size:13px;font-weight:400;color:#4a4f55;letter-spacing:-0.250px;white-space:pre;line-height:normal">A+</div>
<div style="position:absolute;left:732.9px;top:612.00px;font-size:13px;font-weight:400;color:#4a4f55;letter-spacing:-0.250px;white-space:pre;line-height:normal">Chancroid</div>
<div style="position:absolute;left:832.0px;top:612.00px;font-size:13px;font-weight:400;color:#4a4f55;letter-spacing:-0.435px;white-space:pre;line-height:normal">0987654321</div>
<div style="position:absolute;left:920.7px;top:612.00px;font-size:13px;font-weight:400;color:#4a4f55;letter-spacing:-0.108px;white-space:pre;line-height:normal">test@testing.com</div>
<div style="position:absolute;left:1041.6px;top:612.00px;font-size:13px;font-weight:400;color:#4a4f55;letter-spacing:-0.250px;white-space:pre;line-height:normal">491 Towne Parkway</div>
</body></html>
